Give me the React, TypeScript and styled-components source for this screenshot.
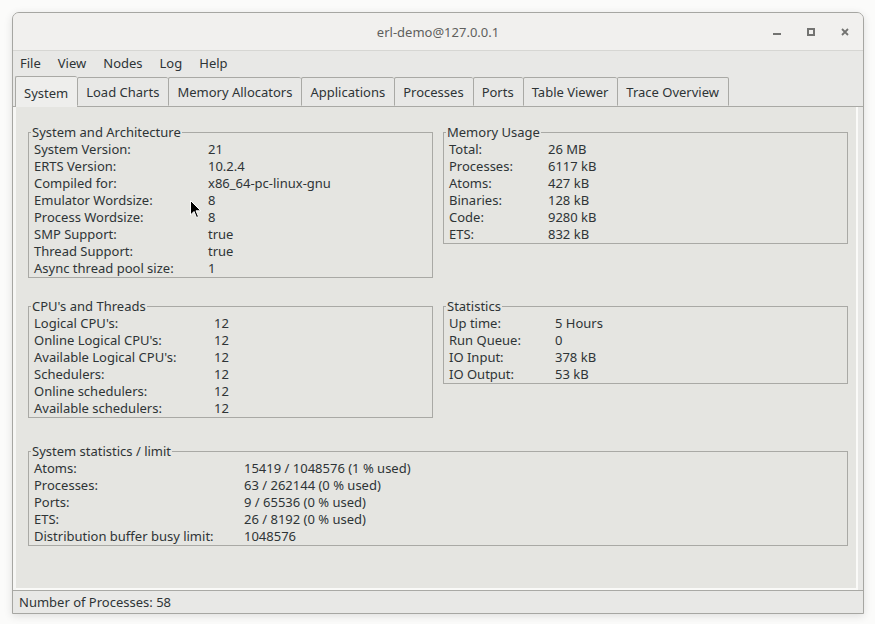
import React from 'react';
import styled, { createGlobalStyle } from 'styled-components';

const Global = createGlobalStyle`
  html, body { margin: 0; padding: 0; background: #fbfbfa; }
  body {
    font-family: "Noto Sans", "DejaVu Sans", sans-serif;
    font-size: 13px;
    color: #2e3436;
  }
  * { box-sizing: border-box; }
`;

const Desktop = styled.div`
  position: relative;
  width: 875px;
  height: 624px;
  padding: 12px 11px 10px 12px;
`;

const Window = styled.div`
  width: 852px;
  height: 602px;
  display: flex;
  flex-direction: column;
  border: 1px solid #a6a6a2;
  border-radius: 7px 7px 0 0;
  box-shadow: 0 2px 8px rgba(0, 0, 0, 0.12);
  overflow: hidden;
  background: #e8e8e6;
`;

const TitleBar = styled.div`
  flex: none;
  height: 38px;
  display: grid;
  grid-template-columns: 1fr auto 1fr;
  align-items: center;
  background: #f1f0ee;
  border-bottom: 1px solid #d6d6d3;
`;

const Title = styled.div`
  grid-column: 2;
  color: #5f5f5d;
  font-size: 13px;
`;

const Controls = styled.div`
  grid-column: 3;
  justify-self: end;
  display: flex;
  padding-right: 1px;
`;

const CtrlButton = styled.div`
  width: 34px;
  height: 37px;
  display: flex;
  align-items: center;
  justify-content: center;
  color: #737371;
`;

const MenuBar = styled.div`
  flex: none;
  height: 25px;
  display: flex;
  align-items: center;
  gap: 17px;
  padding: 0 7px 1px 7px;
  background: #e8e8e6;
`;

const MenuItem = styled.span`
  color: #2e3436;
`;

const TabStrip = styled.div`
  flex: none;
  height: 30px;
  display: flex;
  align-items: flex-end;
  padding-left: 2px;
  background: #e8e8e6;
`;

const Tab = styled.div<{ $active?: boolean }>`
  height: ${(p) => (p.$active ? 31 : 29)}px;
  margin-bottom: ${(p) => (p.$active ? -1 : 0)}px;
  padding: 1px 9px 0 8px;
  display: flex;
  align-items: center;
  border: 1px solid #a9a9a5;
  border-right: none;
  border-bottom: ${(p) => (p.$active ? 'none' : '1px solid transparent')};
  border-radius: 2px 2px 0 0;
  background: ${(p) => (p.$active ? '#eeeeec' : '#e8e8e6')};
  color: #2e3436;
  white-space: nowrap;
  position: relative;
  z-index: ${(p) => (p.$active ? 1 : 0)};
  &:last-child { border-right: 1px solid #a9a9a5; }
`;

const Page = styled.div`
  flex: 1;
  display: flex;
  flex-direction: column;
  padding: 17px 15px 0 15px;
  background: #e5e5e1;
  border-top: 1px solid #a9a9a5;
  box-shadow: inset 3px 0 0 #f6f6f4, inset -5px 0 0 #e8e8e6, inset -7px 0 0 #fafaf8, inset 0 -2px 0 #fafaf8;
`;

const TwoCol = styled.div`
  display: grid;
  grid-template-columns: 1fr 1fr;
  column-gap: 10px;
  row-gap: 20px;
  align-items: start;
`;

const Group = styled.fieldset<{ $gapTop?: number }>`
  margin: ${(p) => p.$gapTop ?? 0}px 0 0 0;
  padding: 0;
  border: 1px solid #a9a9a5;
  min-width: 0;
`;

const Legend = styled.legend`
  margin-left: 2px;
  padding: 0 1px;
  line-height: 17px;
  color: #2e3436;
`;

const Rows = styled.div<{ $labelWidth: number }>`
  display: grid;
  grid-template-columns: ${(p) => p.$labelWidth}px 1fr;
  grid-auto-rows: 17px;
  align-items: center;
  padding-left: 5px;
  line-height: 17px;
`;

const Label = styled.span`
  white-space: nowrap;
`;

const Value = styled.span`
  white-space: nowrap;
`;

const StatusBar = styled.div`
  flex: none;
  height: 23px;
  display: flex;
  align-items: center;
  padding-left: 6px;
  border-top: 1px solid #a9a9a5;
  background: #e8e8e6;
`;

const Cursor = styled.svg`
  position: absolute;
  left: 190px;
  top: 200px;
  pointer-events: none;
`;

type Row = [string, string];

function InfoGroup({
  title,
  rows,
  labelWidth,
  gapTop,
}: {
  title: string;
  rows: Row[];
  labelWidth: number;
  gapTop?: number;
}) {
  return (
    <Group $gapTop={gapTop}>
      <Legend>{title}</Legend>
      <Rows $labelWidth={labelWidth}>
        {rows.map(([l, v]) => (
          <React.Fragment key={l}>
            <Label>{l}</Label>
            <Value>{v}</Value>
          </React.Fragment>
        ))}
      </Rows>
    </Group>
  );
}

const sysArch: Row[] = [
  ['System Version:', '21'],
  ['ERTS Version:', '10.2.4'],
  ['Compiled for:', 'x86_64-pc-linux-gnu'],
  ['Emulator Wordsize:', '8'],
  ['Process Wordsize:', '8'],
  ['SMP Support:', 'true'],
  ['Thread Support:', 'true'],
  ['Async thread pool size:', '1'],
];

const memory: Row[] = [
  ['Total:', '26 MB'],
  ['Processes:', '6117 kB'],
  ['Atoms:', '427 kB'],
  ['Binaries:', '128 kB'],
  ['Code:', '9280 kB'],
  ['ETS:', '832 kB'],
];

const cpu: Row[] = [
  ["Logical CPU's:", '12'],
  ["Online Logical CPU's:", '12'],
  ["Available Logical CPU's:", '12'],
  ['Schedulers:', '12'],
  ['Online schedulers:', '12'],
  ['Available schedulers:', '12'],
];

const stats: Row[] = [
  ['Up time:', '5 Hours'],
  ['Run Queue:', '0'],
  ['IO Input:', '378 kB'],
  ['IO Output:', '53 kB'],
];

const limits: Row[] = [
  ['Atoms:', '15419 / 1048576 (1 % used)'],
  ['Processes:', '63 / 262144 (0 % used)'],
  ['Ports:', '9 / 65536 (0 % used)'],
  ['ETS:', '26 / 8192 (0 % used)'],
  ['Distribution buffer busy limit:', '1048576'],
];

const tabs = [
  'System',
  'Load Charts',
  'Memory Allocators',
  'Applications',
  'Processes',
  'Ports',
  'Table Viewer',
  'Trace Overview',
];

export default function App() {
  return (
    <>
      <Global />
      <Desktop>
        <Window>
          <TitleBar>
            <Title>erl-demo@127.0.0.1</Title>
            <Controls>
              <CtrlButton>
                <svg width="8" height="8" viewBox="0 0 8 8">
                  <rect x="0" y="5" width="8" height="2" fill="currentColor" />
                </svg>
              </CtrlButton>
              <CtrlButton>
                <svg width="8" height="8" viewBox="0 0 8 8">
                  <rect x="1" y="1" width="6" height="6" fill="none" stroke="currentColor" strokeWidth="2" />
                </svg>
              </CtrlButton>
              <CtrlButton>
                <svg width="8" height="8" viewBox="0 0 8 8">
                  <path d="M1 1 L7 7 M7 1 L1 7" stroke="currentColor" strokeWidth="1.8" />
                </svg>
              </CtrlButton>
            </Controls>
          </TitleBar>
          <MenuBar>
            {['File', 'View', 'Nodes', 'Log', 'Help'].map((m) => (
              <MenuItem key={m}>{m}</MenuItem>
            ))}
          </MenuBar>
          <TabStrip>
            {tabs.map((t, i) => (
              <Tab key={t} $active={i === 0}>
                {t}
              </Tab>
            ))}
          </TabStrip>
          <Page>
            <TwoCol>
              <InfoGroup title="System and Architecture" rows={sysArch} labelWidth={174} />
              <InfoGroup title="Memory Usage" rows={memory} labelWidth={99} />
              <InfoGroup title="CPU's and Threads" rows={cpu} labelWidth={180} />
              <InfoGroup title="Statistics" rows={stats} labelWidth={106} />
            </TwoCol>
            <InfoGroup title="System statistics / limit" rows={limits} labelWidth={210} gapTop={25} />
          </Page>
          <StatusBar>Number of Processes: 58</StatusBar>
        </Window>
        <Cursor width="12" height="19" viewBox="0 0 12 19">
          <path d="M0.5 0.5 L0.5 15 L4 11.5 L6.5 17.5 L8.5 16.6 L6 10.8 L10.8 10.8 Z" fill="#000" stroke="#fff" strokeWidth="1" />
        </Cursor>
      </Desktop>
    </>
  );
}
